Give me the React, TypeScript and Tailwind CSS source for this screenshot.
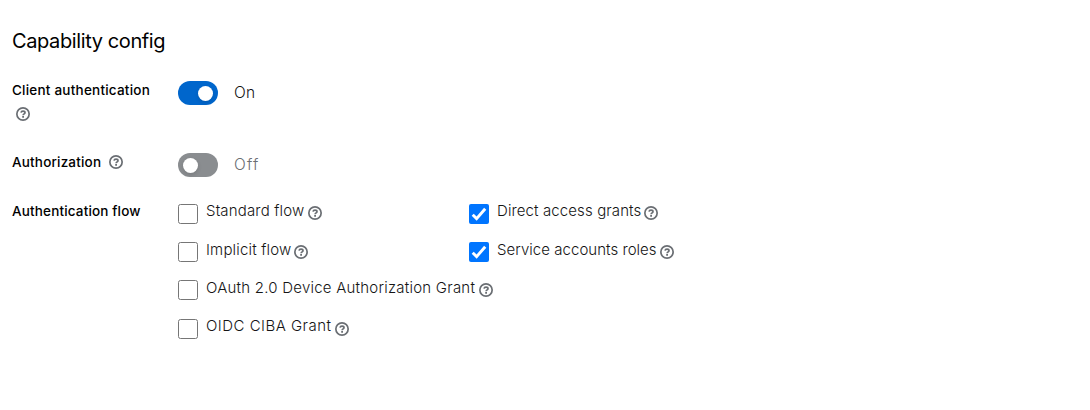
import React from "react";

function HelpIcon({ className = "" }: { className?: string }) {
  return (
    <svg viewBox="0 0 14 14" className={`block h-3.5 w-3.5 shrink-0 text-[#6a6e73] ${className}`} fill="none" stroke="currentColor" aria-hidden="true">
      <circle cx="7" cy="7" r="6.15" strokeWidth="1.7" />
      <path d="M5 5.6C5.2 4.6 6 4.2 7 4.2C8.1 4.2 9 4.7 9 5.7C9 6.9 7.1 6.9 7.1 8.3" strokeWidth="1.7" />
      <path d="M6.2 9.9H8" strokeWidth="1.7" />
    </svg>
  );
}

function Switch({ on }: { on: boolean }) {
  return (
    <div className="flex h-6 items-center">
      <div className={`flex h-6 w-10 items-center rounded-full pl-[4.5px] pr-[5px] ${on ? "justify-end bg-[#0066cc]" : "justify-start bg-[#8a8d90]"}`}>
        <div className="h-[15px] w-[15px] rounded-full bg-white shadow-[0_2px_4px_rgba(3,3,3,0.12)]" />
      </div>
      <span className={`ml-4 text-[15.5px] font-light leading-6 ${on ? "tracking-[0.3px] text-[#151515]" : "tracking-[1.2px] text-[#6a6e73]"}`}>{on ? "On" : "Off"}</span>
    </div>
  );
}

function Option({ label, checked = false, text, icon = "mt-1" }: { label: string; checked?: boolean; text: string; icon?: string }) {
  return (
    <div className="flex h-6 items-start">
      {checked ? (
        <svg viewBox="0 0 20 20" className="mt-0.5 block h-5 w-5 shrink-0" aria-hidden="true">
          <rect width="20" height="20" rx="2" fill="#0075ff" />
          <path d="M3.7 10.7L7.6 14.6L16.2 4.7" fill="none" stroke="white" strokeWidth="2.9" />
        </svg>
      ) : (
        <div className="mt-0.5 h-5 w-5 shrink-0 rounded-[2.5px] border border-[#767676] bg-white" />
      )}
      <span className={`ml-2 shrink-0 whitespace-nowrap text-[15px] font-light leading-[17px] text-[#151515] ${text}`}>{label}</span>
      <HelpIcon className={`ml-1 ${icon}`} />
    </div>
  );
}

export default function App() {
  return (
    <main className="h-[410px] w-[1090px] bg-white pl-3 pt-[26px] font-['Inter',sans-serif] text-[#151515]">
      <h1 className="h-[30px] whitespace-nowrap text-[20px] font-normal leading-[30px] tracking-[-0.39px] text-black">Capability config</h1>

      <div className="mt-[25px] flex h-[72px]">
        <div className="w-[166px]">
          <div className="h-[18px] whitespace-nowrap text-[13.5px] font-medium leading-[18px] tracking-[0.22px] text-black">Client authentication</div>
          <HelpIcon className="ml-1 mt-2" />
        </div>
        <Switch on />
      </div>

      <div className="flex h-[49px]">
        <div className="flex w-[166px] text-[13.5px] font-medium leading-[18px] tracking-[0.18px] text-black">
          <span className="w-[97px]">Authorization</span>
          <HelpIcon className="mt-0.5" />
        </div>
        <Switch on={false} />
      </div>

      <div className="flex">
        <div className="w-[166px] whitespace-nowrap text-[13.5px] font-medium leading-[18px] tracking-[0.16px] text-black">Authentication flow</div>
        <div className="flex w-[291px] flex-col gap-[14.2px]">
          <Option label="Standard flow" text="w-[98px] tracking-[0.16px]" />
          <Option label="Implicit flow" text="w-[84px] pt-px tracking-[0.18px]" icon="mt-[4.8px]" />
          <Option label="OAuth 2.0 Device Authorization Grant" text="w-[269px] pt-px tracking-[0.23px]" icon="mt-[4.6px]" />
          <Option label="OIDC CIBA Grant" text="w-[125px] tracking-[0.48px]" icon="mt-[5.4px]" />
        </div>
        <div className="flex flex-col gap-[14.2px]">
          <Option checked label="Direct access grants" text="w-[143px] tracking-[0.11px]" />
          <Option checked label="Service accounts roles" text="w-[159px] pt-px tracking-[0.04px]" icon="mt-[4.8px]" />
        </div>
      </div>
    </main>
  );
}
